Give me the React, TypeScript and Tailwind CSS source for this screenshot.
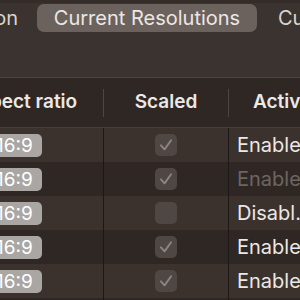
import React from 'react';

interface ResolutionRow {
  ratio: string;
  scaled: boolean;
  status: string;
  dimmed?: boolean;
}

const rows: ResolutionRow[] = [
  { ratio: '16:9', scaled: true, status: 'Enabled' },
  { ratio: '16:9', scaled: true, status: 'Enabled', dimmed: true },
  { ratio: '16:9', scaled: false, status: 'Disabl…' },
  { ratio: '16:9', scaled: true, status: 'Enabled' },
  { ratio: '16:9', scaled: true, status: 'Enabled' },
  { ratio: '16:9', scaled: true, status: 'Enabled' },
];

const Check = () => (
  <svg viewBox="0 0 22 22" className="w-[16px] h-[16px]" fill="none">
    <path d="M4 11.5 L9 17 L18 4.5" stroke="#8c8581" strokeWidth="2.6" strokeLinecap="round" strokeLinejoin="round" />
  </svg>
);

export default function App() {
  return (
    <div
      className="w-[300px] h-[300px] overflow-hidden bg-[#3b332f] text-[20px] text-[#ece8e5]"
      style={{ fontFamily: 'Inter, "Noto Sans", sans-serif' }}
    >
      <div className="h-[3px] bg-[#332c28]" />
      {/* tab bar */}
      <div className="h-[30px] flex items-center whitespace-nowrap">
        <div className="w-[37px] shrink-0 flex justify-end overflow-hidden">
          <span className="pr-[19px] text-[#d9d4d1]">Resolution</span>
        </div>
        <div className="w-[220px] shrink-0 h-[28px] rounded-[7px] bg-[#6b625d] flex items-center justify-center text-[#ebe7e4]">
          Current Resolutions
        </div>
        <div className="ml-[21px] shrink-0 text-[#d9d4d1]">Custom</div>
      </div>
      <div className="h-[44px]" />
      <div className="h-px bg-[#4c4440]" />

      <div className="ml-[-60px] w-[440px]">
        {/* header */}
        <div className="h-[49px] bg-[#2e2724] flex items-center font-semibold text-[19px] whitespace-nowrap">
          <div className="w-[163px] shrink-0 text-center">Aspect ratio</div>
          <div className="w-px h-[28px] bg-[#4e4642]" />
          <div className="w-[124px] shrink-0 text-center">Scaled</div>
          <div className="w-px h-[28px] bg-[#4e4642]" />
          <div className="pl-[24px]">Active</div>
        </div>
        <div className="h-px bg-[#453d39]" />

        {rows.map((row, i) => (
          <div
            key={i}
            className={`h-[34px] flex items-stretch whitespace-nowrap ${i % 2 === 0 ? 'bg-[#3b322e]' : 'bg-[#2f2724]'}`}
          >
            <div className="w-[163px] shrink-0 flex items-center pl-[47px]">
              <span className="h-[23px] px-[9px] rounded-[5px] bg-[#a9a6a4] text-white text-[19px] flex items-center leading-none">
                {row.ratio}
              </span>
            </div>
            <div className="w-px bg-[#1c1816]" />
            <div className="w-[124px] shrink-0 flex items-center justify-center">
              <span className="w-[22px] h-[22px] rounded-[5px] bg-[#4f4743] flex items-center justify-center">
                {row.scaled && <Check />}
              </span>
            </div>
            <div className="w-px bg-[#1c1816]" />
            <div className={`flex items-center pl-[8px] ${row.dimmed ? 'text-[#6d6562]' : 'text-[#ece8e5]'}`}>
              {row.status}
            </div>
          </div>
        ))}
      </div>
    </div>
  );
}
